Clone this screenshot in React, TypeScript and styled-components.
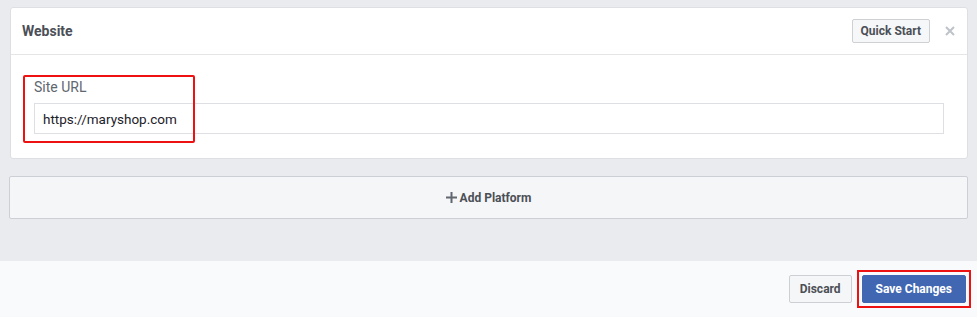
import styled, { createGlobalStyle } from "styled-components";

const GlobalStyle = createGlobalStyle`
  html, body {
    margin: 0;
    padding: 0;
    background: #f9fafb;
    font-family: Roboto, "Liberation Sans", Arial, sans-serif;
  }
`;

const Page = styled.div`
  width: 977px;
  height: 317px;
  display: flex;
  flex-direction: column;
  overflow: hidden;
`;

const Content = styled.div`
  height: 261px;
  box-sizing: border-box;
  padding: 7px 9px 0 10px;
  background-color: #e9ebee;
  display: flex;
  flex-direction: column;
`;

const Card = styled.div`
  background: #fff;
  border: 1px solid #dddfe2;
  border-radius: 3px;
`;

const CardHeader = styled.div`
  height: 47px;
  box-sizing: border-box;
  padding: 0 12px 0 11px;
  display: flex;
  align-items: center;
  border-bottom: 1px solid #e5e5e5;
`;

const Title = styled.div`
  flex: 1;
  font-size: 14px;
  font-weight: 700;
  color: #4b4f56;
`;

const Button = styled.button<{ $primary?: boolean }>`
  box-sizing: border-box;
  height: ${(p) => (p.$primary ? "28px" : "24px")};
  padding: 0 ${(p) => (p.$primary ? "13px" : "8px")};
  border: 1px solid ${(p) => (p.$primary ? "#4267b2" : "#ced0d4")};
  border-radius: 2px;
  background: ${(p) => (p.$primary ? "#4267b2" : "#f6f7f9")};
  color: ${(p) => (p.$primary ? "#fff" : "#4b4f56")};
  font-family: inherit;
  font-size: 12px;
  font-weight: 700;
  line-height: 1;
  cursor: pointer;
`;

/* red annotation frame drawn round a control */
const Marked = styled.span`
  display: flex;
  padding: 3px;
  margin: -5px -5px 0 0;
  border: 2px solid #ee1111;
`;

const Close = styled.span`
  width: 10px;
  height: 10px;
  margin-left: 15px;
  display: flex;
  align-items: center;
  justify-content: center;
`;

const CardBody = styled.div`
  padding: 23px 23px 24px 23px;
`;

const Field = styled.div`
  position: relative;
  display: flex;
  flex-direction: column;
  gap: 7px;
`;

const Label = styled.label`
  font-size: 14px;
  line-height: 18px;
  color: #606770;
`;

const Input = styled.input`
  box-sizing: border-box;
  height: 31px;
  width: 100%;
  padding: 0 8px;
  border: 1px solid #dddfe2;
  border-radius: 0;
  font-family: inherit;
  font-size: 13.5px;
  color: #1d2129;
  outline: none;
`;

const Highlight = styled.div`
  position: absolute;
  left: -11px;
  top: -3px;
  width: 172px;
  height: 68px;
  box-sizing: border-box;
  border: 2px solid #ee1111;
  border-radius: 2px;
  pointer-events: none;
`;

const AddPlatform = styled.button`
  margin: 17px 0 0 -1px;
  height: 43px;
  box-sizing: border-box;
  border: 1px solid #ccd0d5;
  border-radius: 2px;
  background: #f5f6f7;
  color: #4b4f56;
  font-family: inherit;
  font-size: 12px;
  font-weight: 700;
  display: flex;
  align-items: center;
  justify-content: center;
  gap: 3px;
  cursor: pointer;
`;

const Footer = styled.div`
  flex: 1;
  background: #f9fafb;
  display: flex;
  justify-content: flex-end;
  align-items: flex-start;
  gap: 10px;
  padding: 14px 11px 0 0;
`;

const DiscardButton = styled(Button)`
  height: 28px;
  background: #f5f6f7;
  border-color: #ccd0d5;
  padding: 0 10px;
  margin-right: -5px;
`;

function CloseIcon() {
  return (
    <svg width="10" height="10" viewBox="0 0 10 10">
      <path d="M1 1L9 9M9 1L1 9" stroke="#bec3c9" strokeWidth="2" />
    </svg>
  );
}

function PlusIcon() {
  return (
    <svg width="11" height="11" viewBox="0 0 11 11">
      <path d="M5.5 0V11M0 5.5H11" stroke="#606770" strokeWidth="2" />
    </svg>
  );
}

export default function App() {
  return (
    <>
      <GlobalStyle />
      <Page>
        <Content>
          <Card>
            <CardHeader>
              <Title>Website</Title>
              <Button>Quick Start</Button>
              <Close>
                <CloseIcon />
              </Close>
            </CardHeader>
            <CardBody>
              <Field>
                <Label>Site URL</Label>
                <Input defaultValue="https://maryshop.com" />
                <Highlight />
              </Field>
            </CardBody>
          </Card>
          <AddPlatform>
            <PlusIcon />
            Add Platform
          </AddPlatform>
        </Content>
        <Footer>
          <DiscardButton>Discard</DiscardButton>
          <Marked>
            <Button $primary>Save Changes</Button>
          </Marked>
        </Footer>
      </Page>
    </>
  );
}
